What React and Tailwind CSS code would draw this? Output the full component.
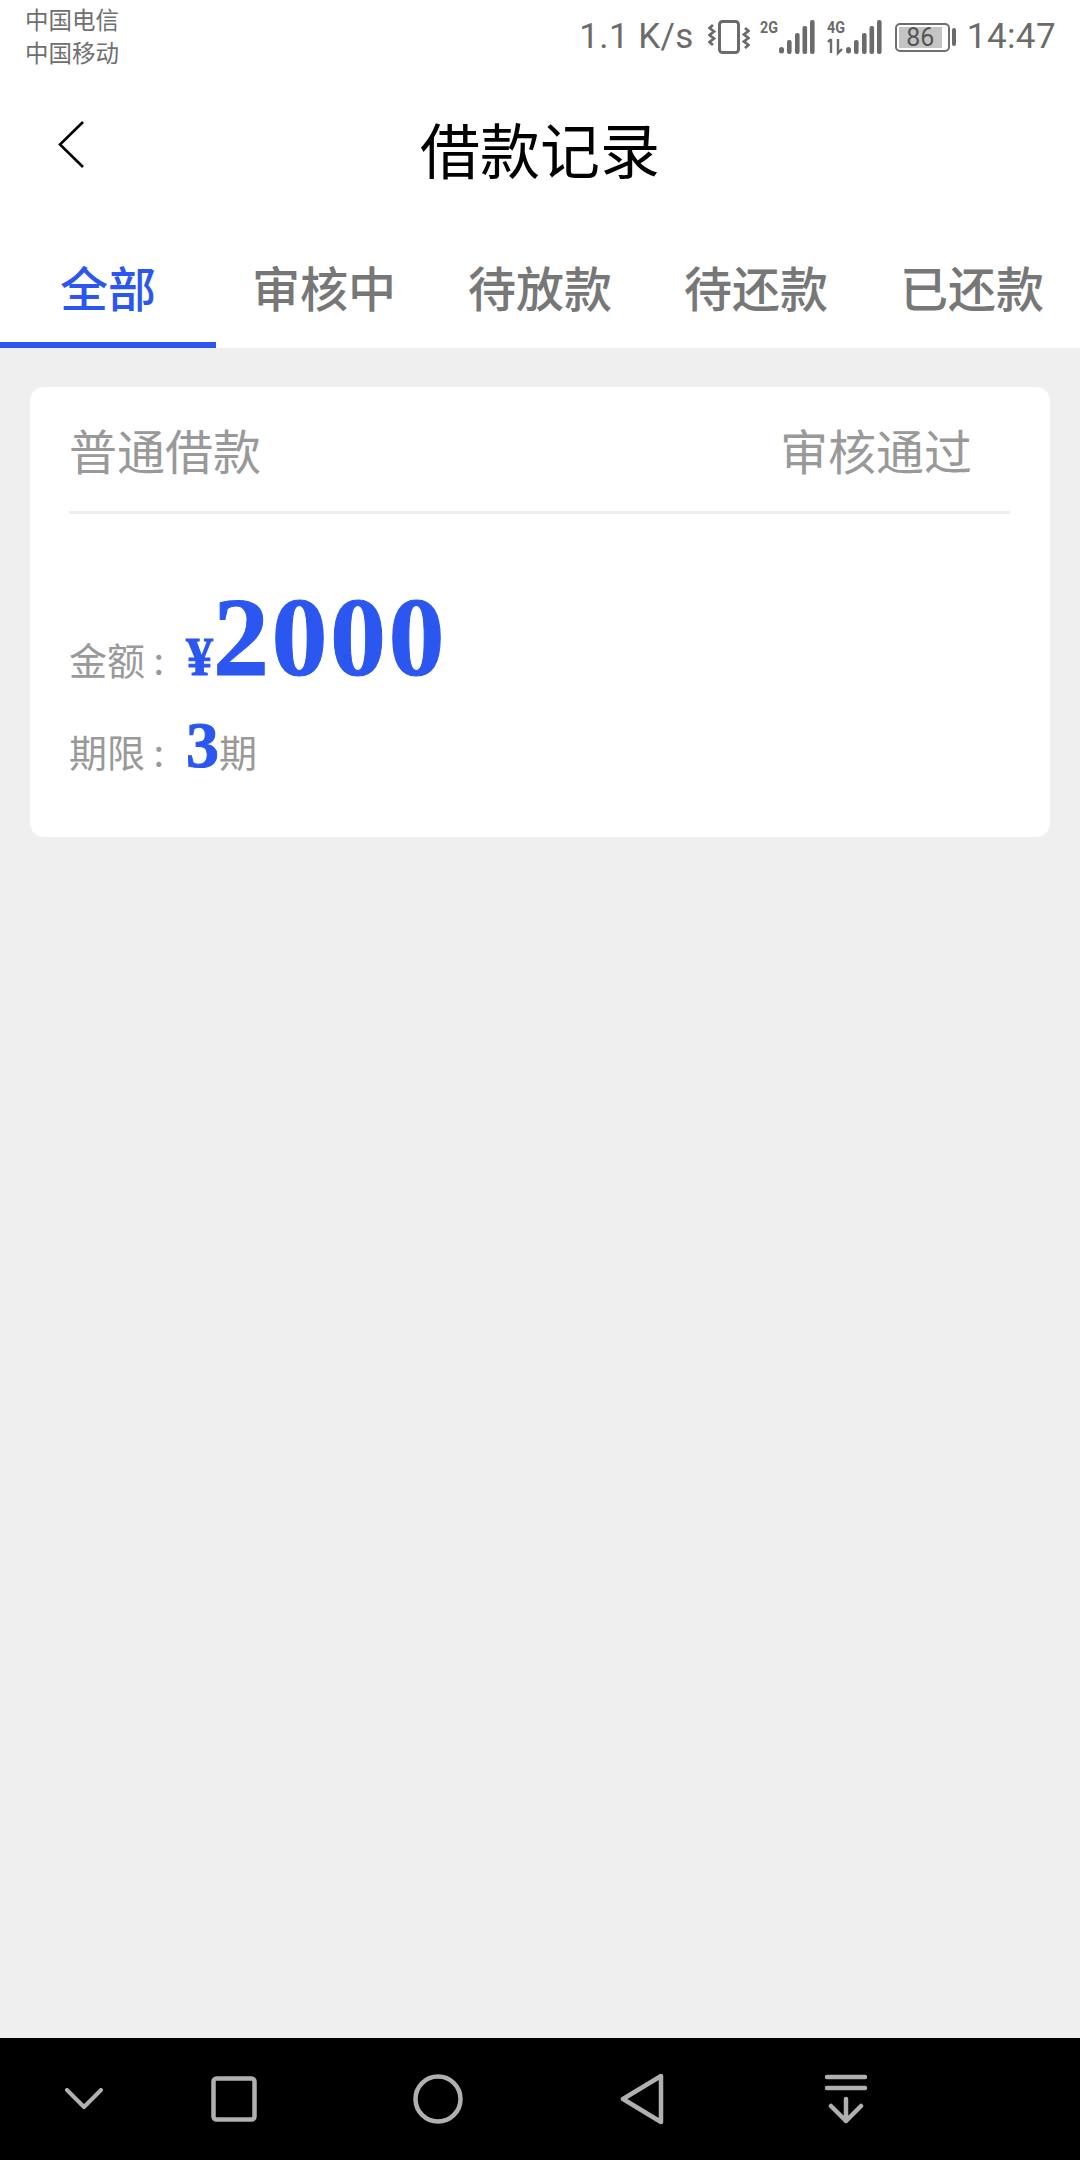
import React from "react";

const cjk = "font-['Noto_Sans_CJK_SC','Noto_Sans',sans-serif]";
const serif = "font-['Liberation_Serif',serif] font-bold text-[#2b57f0] [-webkit-text-stroke:1px_#2b57f0]";

function Vibrate() {
  return (
    <svg width="42" height="34" viewBox="0 0 42 34" fill="none" stroke="#6b6b6b" className="block">
      <rect x="11.5" y="1.5" width="19" height="31" rx="3" strokeWidth="3" />
      <path d="M5 5 L1.5 8 L6 11.5 L1.5 15 L6 18.5 L1.5 22 L5 25" strokeWidth="2.8" />
      <path d="M37 8 L40.5 11 L36 14.5 L40.5 18 L36 21.5 L40.5 25 L37 28" strokeWidth="2.8" />
    </svg>
  );
}

function Signal({ label, arrows }) {
  return (
    <svg width="55" height="48" viewBox="0 -6 55 48" className="block">
      <text x="0" y="14" fontSize="17" fontWeight="700" fill="#6b6b6b" fontFamily="Roboto, sans-serif" textLength="18" lengthAdjust="spacingAndGlyphs">{label}</text>
      {arrows && <path d="M4 34 V20 M1 23 L4 20 M11 20 V34 L15 30" stroke="#6b6b6b" strokeWidth="2.4" fill="none" />}
      <g fill="#6b6b6b">
        <rect x="19" y="28" width="5" height="6.5" rx="2.5" />
        <rect x="27" y="21" width="4.6" height="14" rx="2" />
        <rect x="35" y="14" width="4.6" height="21" rx="2" />
        <rect x="42.5" y="7" width="4.6" height="28" rx="2" />
        <rect x="50" y="1" width="4.6" height="34" rx="2" />
      </g>
    </svg>
  );
}

function StatusBar() {
  return (
    <div className="flex h-[74px] items-center justify-between pl-[25px] pr-[24px]">
      <div className={`${cjk} mb-[2px] flex flex-col text-[23.5px] leading-[33px] text-[#6f6f6f]`}>
        <span>中国电信</span>
        <span>中国移动</span>
      </div>
      <div className="flex items-center font-['Roboto',sans-serif] text-[35px] leading-[40px] text-[#6b6b6b]">
        <span className="tracking-[0.4px]">1.1 K/s</span>
        <span className="ml-[14px]"><Vibrate /></span>
        <span className="ml-[10px]"><Signal label="2G" /></span>
        <span className="ml-[12px]"><Signal label="4G" arrows /></span>
        <div className="ml-[13px] flex items-center">
          <div className="h-[29px] w-[55px] rounded-[5px] border-2 border-[#6f6f6f] p-[2px]">
            <div className="flex h-full w-[43px] items-center justify-center bg-[#c4c4c4] text-[25px] leading-none text-[#555555]">86</div>
          </div>
          <div className="ml-[2px] h-[18px] w-[4px] rounded-[2px] bg-[#6b6b6b]" />
        </div>
        <span className="ml-[11px] tracking-[0.4px]">14:47</span>
      </div>
    </div>
  );
}

function Header() {
  return (
    <div className="relative flex h-[154px] items-center justify-center pb-[6px]">
      <svg width="28" height="48" viewBox="0 0 28 48" fill="none" stroke="#000" strokeWidth="2.6" className="absolute left-[58px] top-[46px]">
        <path d="M25 2 L2 24.5 L25 47" />
      </svg>
      <h1 className={`${cjk} text-[60px] leading-none font-normal text-black`}>借款记录</h1>
    </div>
  );
}

const tabs = ["全部", "审核中", "待放款", "待还款", "已还款"];

function Tabs() {
  return (
    <div className="grid h-[120px] grid-cols-5">
      {tabs.map((t, i) => (
        <div
          key={t}
          className={`${cjk} flex items-center justify-center border-b-[6px] pt-[2px] text-[48px] leading-none font-medium ${
            i === 0 ? "border-[#2b57f0] text-[#2b57f0]" : "border-transparent text-[#777777]"
          }`}
        >
          {t}
        </div>
      ))}
    </div>
  );
}

function Card() {
  return (
    <div className="mx-[30px] mt-[39px] h-[450px] rounded-[14px] bg-white pl-[39px] pr-[40px]">
      <div className="flex h-[127px] items-center justify-between border-b-[3px] border-[#eeeeee] pr-[38px]">
        <span className={`${cjk} text-[48px] leading-none text-[#999999]`}>普通借款</span>
        <span className={`${cjk} text-[48px] leading-none text-[#999999]`}>审核通过</span>
      </div>
      <div className="mt-[73px] flex h-[100px] items-baseline">
        <span className={`${cjk} w-[117px] text-[38px] leading-[100px] text-[#999999]`}>金额 :</span>
        <span className={`${serif} text-[54px] leading-[100px]`}>¥</span>
        <span className={`${serif} text-[112px] leading-[100px] tracking-[2.5px]`}>2000</span>
      </div>
      <div className="mt-[8px] flex h-[100px] items-baseline">
        <span className={`${cjk} w-[117px] text-[38px] leading-[100px] text-[#999999]`}>期限 :</span>
        <span className={`${serif} text-[66px] leading-[100px]`}>3</span>
        <span className={`${cjk} text-[38px] leading-[100px] text-[#999999]`}>期</span>
      </div>
    </div>
  );
}

function NavBar() {
  const s = { fill: "none", stroke: "#b0b0b0", strokeLinecap: "round", strokeLinejoin: "round" };
  return (
    <div className="flex h-[122px] items-center bg-black pl-[65px]">
      <svg width="38" height="22" viewBox="0 0 38 22" {...s} strokeWidth="4"><path d="M2 2 L19 19 L36 2" /></svg>
      <svg width="46" height="46" viewBox="0 0 46 46" {...s} strokeWidth="4.5" className="ml-[108px]"><rect x="2.5" y="2.5" width="41" height="41" rx="3" /></svg>
      <svg width="50" height="50" viewBox="0 0 50 50" {...s} strokeWidth="4.5" className="ml-[156px]"><circle cx="25" cy="25" r="22.5" /></svg>
      <svg width="44" height="52" viewBox="0 0 44 52" {...s} strokeWidth="4.5" className="ml-[157px]"><path d="M41 3 V49 L3 26 Z" /></svg>
      <svg width="44" height="50" viewBox="0 0 44 50" {...s} strokeWidth="4.5" className="ml-[160px]">
        <path d="M3 3 H41 M3 14 H41" />
        <path d="M22 25 V47 M7 32 L22 47 L37 32" />
      </svg>
    </div>
  );
}

export default function App() {
  return (
    <div className="flex h-[2160px] w-[1080px] flex-col bg-[#efefef]">
      <div className="bg-white">
        <StatusBar />
        <Header />
        <Tabs />
      </div>
      <Card />
      <div className="flex-1" />
      <NavBar />
    </div>
  );
}
